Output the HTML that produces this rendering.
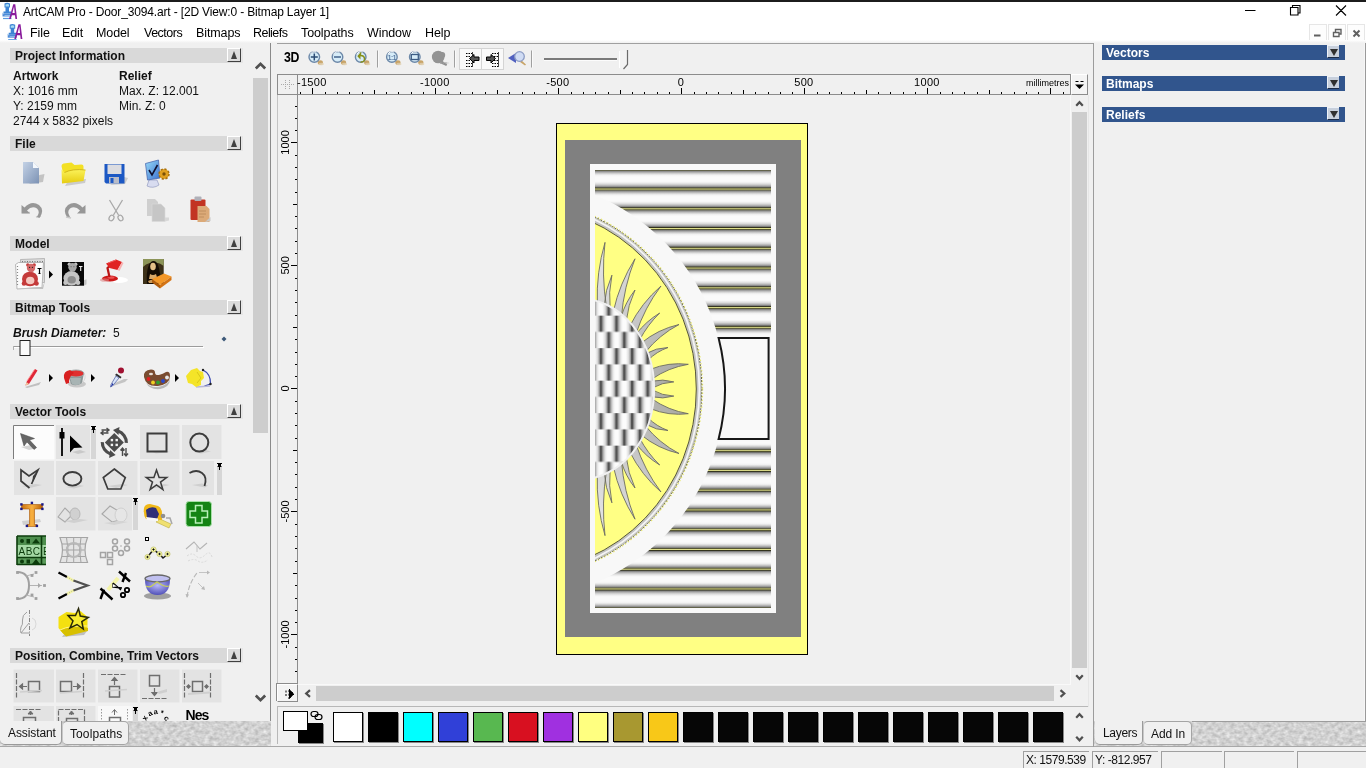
<!DOCTYPE html>
<html><head><meta charset="utf-8"><title>ArtCAM Pro</title>
<style>
*{box-sizing:border-box;margin:0;padding:0}
html,body{width:1366px;height:768px;overflow:hidden;background:#f0f0f0;font-family:"Liberation Sans",sans-serif;font-size:12px;color:#111}
.abs,.abs>*{position:absolute}
#root{position:relative;width:1366px;height:768px;overflow:hidden;background:transparent;will-change:transform}
#root div,#root span,#root svg{position:absolute}
.t{white-space:nowrap;line-height:14px}
.b{font-weight:bold}
/* title + menu */
#topline{left:0;top:0;width:1366px;height:2px;background:#1c1c1c}
#titlebar{left:0;top:2px;width:1366px;height:41px;background:#fff}
.title{left:23px;top:5px;font-size:12px;letter-spacing:-.15px;color:#000}
.menu{top:26px;font-size:12.5px;color:#000;letter-spacing:-.1px}
/* left panel */
#left{left:0;top:43px;width:270px;height:705px;background:#f0f0f0}
.hdr{left:10px;width:233px;height:15px;background:#d9d9d9}
.hdr .t{left:5px;top:1px;font-weight:bold;color:#111}
.hbtn{left:217px;top:0;width:14px;height:14px;background:#dcdcdc;border-right:1px solid #404040;border-bottom:1px solid #404040;border-left:1px solid #fff;border-top:1px solid #fff}
.hdr:after{content:"";position:absolute;left:231px;top:0;width:2px;height:15px;background:#e6e6e6}
.hbtn i{position:absolute;left:2.5px;top:2px;width:0;height:0;border-left:3.5px solid transparent;border-right:3.5px solid transparent;border-bottom:8px solid #404040}
/* right panel */
.rh{left:1102px;width:243px;height:15px;background:#31558d}
.rh .t{left:4px;top:1px;font-weight:bold;color:#fff}
.rbtn{left:225px;top:0;width:12px;height:13px;background:#c8d0dc;border-left:1px solid #eef2f8;border-top:1px solid #eef2f8;border-bottom:1px solid #1c2c48}
.rbtn i{position:absolute;left:1.5px;top:2.5px;width:0;height:0;border-left:4px solid transparent;border-right:4px solid transparent;border-top:7.5px solid #303030}
</style></head>
<body><div id="root">
<div id="topline"></div>
<div id="titlebar"></div>
<svg style="left:0;top:0" width="60" height="43" viewBox="0 0 60 43"><g><path d="M4.500 3.500q2.500-1.500 5.500 0v4h-1v4h2v2h-7.500v-2h2v-4h-1z" fill="#3c84d4"/><path d="M5.500 4.500q2-1 3.500 0v2h-3.500z" fill="#a8dcf4"/><path d="M2.500 13.500h9v3h-9z" fill="#4c8cd8"/><path d="M2 13l2 1M4.500 15.500h6" stroke="#a8c8ec" stroke-width=".8"/><path d="M3 18.500h8.500" stroke="#5c9ce0" stroke-width="1.200"/><text transform="translate(8.800,18.800) scale(.56,1) skewX(-8)" font-size="21.500" font-weight="bold" fill="#8a1c9c">A</text></g><g transform="translate(5.200,21.200)"><path d="M4.500 3.500q2.500-1.500 5.500 0v4h-1v4h2v2h-7.500v-2h2v-4h-1z" fill="#3c84d4"/><path d="M5.500 4.500q2-1 3.500 0v2h-3.500z" fill="#a8dcf4"/><path d="M2.500 13.500h9v3h-9z" fill="#4c8cd8"/><path d="M2 13l2 1M4.500 15.500h6" stroke="#a8c8ec" stroke-width=".8"/><path d="M3 18.500h8.500" stroke="#5c9ce0" stroke-width="1.200"/><text transform="translate(8.800,18) scale(.56,1) skewX(-8)" font-size="21.500" font-weight="bold" fill="#8a1c9c">A</text></g></svg>
<svg style="left:1226px;top:0" width="140" height="43" viewBox="1226 0 140 43"><path d="M1245 10.500h10.500M1290.500 7.500h7.500v7.500h-7.500zM1292.500 7.500v-2h7.500v7.500h-2M1336 5.500l10 10M1346 5.500l-10 10" fill="none" stroke="#000" stroke-width="1.100"/>
<rect x="1309.500" y="24.500" width="17" height="16.500" fill="#fdfdfd" stroke="#e6e6e6"/><rect x="1328.500" y="24.500" width="17" height="16.500" fill="#fdfdfd" stroke="#e6e6e6"/><rect x="1347.500" y="24.500" width="17" height="16.500" fill="#fdfdfd" stroke="#e6e6e6"/>
<path d="M1314 35.500h6.500" stroke="#606060" stroke-width="2"/><path d="M1333.500 32.500h5.500v4h-5.500zM1335.500 32v-2.500h5.500v4.500h-2" fill="none" stroke="#606060" stroke-width="1.400"/><path d="M1353.500 30.500l6 6M1359.500 30.500l-6 6" stroke="#606060" stroke-width="2"/></svg>
<div style="left:0;top:40px;width:1366px;height:3px;background:linear-gradient(#fff,#f0f0f0)"></div>
<span class="t title">ArtCAM Pro - Door_3094.art - [2D View:0 - Bitmap Layer 1]</span>
<span class="t menu" style="left:30px">File</span>
<span class="t menu" style="left:62px">Edit</span>
<span class="t menu" style="left:96px">Model</span>
<span class="t menu" style="left:144px;letter-spacing:-.5px">Vectors</span>
<span class="t menu" style="left:196px">Bitmaps</span>
<span class="t menu" style="left:253px;letter-spacing:-.55px">Reliefs</span>
<span class="t menu" style="left:301px">Toolpaths</span>
<span class="t menu" style="left:367px">Window</span>
<span class="t menu" style="left:425px">Help</span>

<!-- LEFT PANEL -->
<div id="left"></div>
<div class="hdr" style="top:48px"><span class="t">Project Information</span><div class="hbtn"><i></i></div></div>
<span class="t b" style="left:13px;top:69px">Artwork</span>
<span class="t b" style="left:119px;top:69px">Relief</span>
<span class="t" style="left:13px;top:84px">X: 1016 mm</span>
<span class="t" style="left:119px;top:84px">Max. Z: 12.001</span>
<span class="t" style="left:13px;top:99px">Y: 2159 mm</span>
<span class="t" style="left:119px;top:99px">Min. Z: 0</span>
<span class="t" style="left:13px;top:114px">2744 x 5832 pixels</span>
<div class="hdr" style="top:136px"><span class="t">File</span><div class="hbtn"><i></i></div></div>
<div class="hdr" style="top:236px"><span class="t">Model</span><div class="hbtn"><i></i></div></div>
<div class="hdr" style="top:300px"><span class="t">Bitmap Tools</span><div class="hbtn"><i></i></div></div>
<div class="hdr" style="top:404px"><span class="t">Vector Tools</span><div class="hbtn"><i></i></div></div>
<div class="hdr" style="top:648px"><span class="t">Position, Combine, Trim Vectors</span><div class="hbtn"><i></i></div></div>
<svg style="left:0;top:43px" width="270" height="678" viewBox="0 43 270 678">
<defs>
<linearGradient id="gdoc" x1="0" y1="0" x2="1" y2="1"><stop offset="0" stop-color="#c4d2e6"/><stop offset="1" stop-color="#7c92b4"/></linearGradient>
<linearGradient id="gfl" x1="0" y1="0" x2="0" y2="1"><stop offset="0" stop-color="#fbf25a"/><stop offset="1" stop-color="#e6cc10"/></linearGradient>
<linearGradient id="gmon" x1="0" y1="0" x2="1" y2="1"><stop offset="0" stop-color="#9adcf8"/><stop offset="1" stop-color="#3a70d0"/></linearGradient>
<linearGradient id="gT" x1="0" y1="0" x2="1" y2="0"><stop offset="0" stop-color="#c87010"/><stop offset=".5" stop-color="#f8b040"/><stop offset="1" stop-color="#b86008"/></linearGradient>
<radialGradient id="gbowl" cx=".5" cy=".4" r=".6"><stop offset="0" stop-color="#b8b8f8"/><stop offset="1" stop-color="#5050b8"/></radialGradient>
<linearGradient id="ggrn" x1="0" y1="0" x2="0" y2="1"><stop offset="0" stop-color="#98d898"/><stop offset="1" stop-color="#4ca04c"/></linearGradient>
</defs>
<path d="M29 184l14-2 1.5-8-5 1z" fill="#b8b8b8" opacity=".8"/>
<path d="M23 162h10l6 6v15.5H23z" fill="url(#gdoc)"/><path d="M33 162v6h6z" fill="#f4f8fc"/>
<path d="M65 186l20-3 1-4-18 2z" fill="#bbb" opacity=".7"/>
<path d="M61.500 166q0-2 2-2.500l8-1 3 2.500 7-.5q2 0 2 2v6l-20 3z" fill="#f3e024"/>
<path d="M62 183.500l-.5-14 3 3q8-4 21-2.500l-2 11z" fill="url(#gfl)"/><path d="M64.500 172.500q8-4 21-2.500" stroke="#c8aa10" stroke-width=".8" fill="none"/>
<path d="M110 185l15-1 3-6-4-1z" fill="#bbb" opacity=".7"/>
<path d="M104.500 164h20v19.500h-18.500l-1.500-1.500z" fill="#1c58c4"/><rect x="107.500" y="164.500" width="14" height="9.500" fill="#dcdce0"/><rect x="109" y="177" width="10" height="6.500" fill="#b8bcc8"/><rect x="110.500" y="178" width="3" height="5" fill="#1c58c4"/>
<path d="M147 186q6 3 12-1l-2-5h-8z" fill="#d8dcf0" stroke="#8890b8" stroke-width=".6"/>
<path d="M145.500 163.500l13-3.500 1.500 18-12.500 2z" fill="url(#gmon)" stroke="#4a68b0" stroke-width=".8"/>
<path d="M149 170l3 5 5.500-10" fill="none" stroke="#101030" stroke-width="1.600"/>
<circle cx="164" cy="174" r="5" fill="#e0a020" stroke="#a87010" stroke-width="1.500" stroke-dasharray="2.200 1.700"/><circle cx="164" cy="174" r="1.700" fill="#7a5008"/>
<path d="M22 212.500h8M36 217l5-1" stroke="#c8c8c8" stroke-width="1.500"/>
<path d="M21.500 205v8.500h8.500l-3-3q5-5.500 10-2 3.500 3 0 8.500l2.500 1q5.500-8-.5-13-7.500-5-14.500 2.500z" fill="#979797"/>
<g transform="translate(107,0) scale(-1,1)"><path d="M21.500 205v8.500h8.500l-3-3q5-5.500 10-2 3.500 3 0 8.500l2.500 1q5.500-8-.5-13-7.500-5-14.500 2.500z" fill="#979797"/></g><path d="M66 217l5 1" stroke="#c8c8c8" stroke-width="1.500"/>
<path d="M109.500 200l9 15M122.500 200l-9 15" stroke="#a8a8a8" stroke-width="1.300" fill="none"/><ellipse cx="111.500" cy="218" rx="2.300" ry="3" fill="none" stroke="#a8a8a8" stroke-width="1.200" transform="rotate(30 111.500 218)"/><ellipse cx="120.500" cy="218" rx="2.300" ry="3" fill="none" stroke="#a8a8a8" stroke-width="1.200" transform="rotate(-30 120.500 218)"/>
<path d="M147 199h8l3 3v14h-11z" fill="#cfcfcf"/><path d="M152 204h9l4 4v13.500h-13z" fill="#c6c6c6" stroke="#dadada" stroke-width=".6"/><path d="M165 221.500l4-1v-3h-4z" fill="#d8d8d8"/>
<rect x="190.500" y="199.500" width="15" height="20.500" rx="1" fill="#c23422"/><rect x="194.500" y="196.500" width="7" height="4.500" rx="1" fill="#b0b0b8"/><path d="M197.500 206h9l3 3v13h-12z" fill="#dcaa78"/><path d="M199 211h7M199 214h7M199 217h5" stroke="#b88858" stroke-width=".8"/><path d="M205 222l5.500-1v-4z" fill="#c8c8c8"/>
<path d="M20.500 259.500l24-1v24h-24z" fill="#dcdcdc" stroke="#a4a4a4" stroke-width=".7"/><path d="M22 262h21" stroke="#555" stroke-width="1.500" stroke-dasharray="1 1.500"/>
<path d="M15.500 264.500l3-2 25 0-1.500 25-25 1.500z" fill="#fbfbfb" stroke="#a8a8a8" stroke-width=".8"/><path d="M17.500 266v20" stroke="#888" stroke-width="1.200" stroke-dasharray="1 2"/><path d="M17 288.500l25.500-1.500 2.500-6-2 8z" fill="#c0c0c0"/>
<circle cx="27.8" cy="265" r="1.700" fill="#c43a3a"/><circle cx="34.2" cy="265" r="1.700" fill="#c43a3a"/><ellipse cx="30" cy="279" rx="8" ry="7.300" fill="#c43a3a"/><circle cx="24" cy="283.5" r="2.300" fill="#c43a3a"/><circle cx="36.5" cy="283.5" r="2.300" fill="#c43a3a"/><circle cx="31" cy="268" r="4.200" fill="#d46868"/><ellipse cx="30.2" cy="280.5" rx="4.200" ry="3.800" fill="#f4c8c0"/><circle cx="29.6" cy="267.4" r=".6" fill="#222"/><circle cx="32.4" cy="267.4" r=".6" fill="#222"/>
<path d="M37.500 268.500h4M39.500 268.500v5M38.500 273.500h2" stroke="#000" stroke-width="1.200"/>
<path d="M49 270.5l4 4-4 4z" fill="#000"/>
<rect x="62" y="262" width="22" height="23.700" fill="#080808"/><path d="M84 285.700l2.500-1.500v-5l-2.500 1z" fill="#c4c4c4"/>
<circle cx="69.3" cy="264.3" r="1.700" fill="#c4c4c4"/><circle cx="75.7" cy="264.3" r="1.700" fill="#c4c4c4"/><ellipse cx="71.5" cy="278.3" rx="8" ry="7.300" fill="#c4c4c4"/><circle cx="65.5" cy="282.8" r="2.300" fill="#c4c4c4"/><circle cx="78.0" cy="282.8" r="2.300" fill="#c4c4c4"/><circle cx="72.5" cy="267.3" r="4.200" fill="#a8a8a8"/><ellipse cx="71.7" cy="279.8" rx="4.200" ry="3.800" fill="#8c8c8c"/><circle cx="71.1" cy="266.7" r=".6" fill="#666"/><circle cx="73.9" cy="266.7" r=".6" fill="#666"/>
<path d="M79 266.500h3.500M80.700 266.500v4.500" stroke="#f0f0f0" stroke-width="1.100"/>
<ellipse cx="119" cy="280" rx="9" ry="3" fill="#fff"/><ellipse cx="110" cy="278.500" rx="8" ry="3" fill="#cc1818"/><ellipse cx="104.500" cy="280" rx="4.500" ry="1.800" fill="#d88" opacity=".6"/><ellipse cx="111" cy="277.500" rx="3.500" ry="1.300" fill="#ee5050"/>
<path d="M109.500 277l-2-9 3-3" fill="none" stroke="#b81414" stroke-width="2.200"/><path d="M106 263.500l10-4 6 2.500-4.500 8-8-2z" fill="#e02424"/><path d="M117.500 270l4.500-8 1.500 1-4 8z" fill="#f8b0b0"/><path d="M108 263l8-3" stroke="#f46060" stroke-width="1"/>
<rect x="143" y="259" width="20.700" height="25" fill="#3c3018"/><path d="M143 259h20.700v7q-4-3-6-3h-8q-4 1-6.700 4z" fill="#8c9458"/><path d="M147 284q-1-12 1.500-18 2-5 5-5t4.500 4q3 8 2 19z" fill="#140c04"/><ellipse cx="153" cy="266.500" rx="2.800" ry="3.800" fill="#e4c088"/><path d="M150 274q3 2 6 0l1.500 5h-8.500z" fill="#d8a868"/><path d="M148 281q5-3 10 0l-1 2h-8z" fill="#c89858"/>
<path d="M152 279l12-5.500 7.500 3-11.500 8.500z" fill="#f49828"/><path d="M152 279l8 6v3.500l-8-6z" fill="#b05c0c"/><path d="M160 285l11.500-8.500v3.500l-11.500 8.500z" fill="#d47414"/>
<path d="M13.500 346.500H203" stroke="#9c9c9c" stroke-width="1"/><path d="M14 347.500H204" stroke="#fff" stroke-width="1"/><path d="M13.500 346v4" stroke="#b0b0b0"/>
<rect x="20" y="340.500" width="10" height="15" fill="#fafafa" stroke="#222" stroke-width="1"/>
<path d="M224 336.500l2.500 2.500-2.500 2.500-2.500-2.500z" fill="#3c5878"/>
<path d="M25 387l16-5-2 3-12 3z" fill="#c0c0c0"/><path d="M25.500 385.500l1-3.500 8.500-13 2.500 1.500-8.500 13.500z" fill="#e02838"/><path d="M25.500 385.500l1-3.500 2.500 2z" fill="#f0c8a0"/><path d="M27 381l7.500-11.500" stroke="#f88" stroke-width=".8"/>
<path d="M49 374l4 4-4 4z" fill="#000"/>
<ellipse cx="77" cy="384" rx="9" ry="3.500" fill="#c8c8c8"/><path d="M68 374l3 10q5 3 11-1l2-10z" fill="#8c9898"/><path d="M70 378l2 6q4 2 8 0l1-6z" fill="#a8b4b4"/><ellipse cx="76" cy="373.500" rx="8" ry="3.500" fill="#e03030" stroke="#a0a8a8" stroke-width="1"/><path d="M64 378q-1-7 6-8l4 3q-5 3-5 10l-3 1z" fill="#d82020"/><path d="M84 373q3 5-2 10" fill="none" stroke="#d8d8d8" stroke-width="1"/>
<path d="M91 374l4 4-4 4z" fill="#000"/>
<path d="M113 386l12-4 3-3-4 0-9 4z" fill="#c4c4c4"/><circle cx="121" cy="370.500" r="3" fill="#a01030"/><path d="M116.500 373.500l5 3.500-1 1.500-5.500-3.500z" fill="#303030"/><path d="M116 376l3 2-6.500 8-2 1 .5-2.500z" fill="#d8e4f8" stroke="#5868a8" stroke-width=".8"/><path d="M112.500 383l-2 4 3-2.500z" fill="#2030a0"/>
<path d="M144 377q-1-7 7-7.500 4 0 4 3t4 2.500q4-1 7-3 4-1 4 4 0 8-12 10-12 1-14-9z" fill="#7a4c30"/><path d="M146 383q6 6 16 3 6-2 8-7 0 8-10 10-10 1-14-6z" fill="#a0a0a0" opacity=".7"/>
<circle cx="148.5" cy="379" r="1.900" fill="#e02020"/>
<circle cx="153" cy="382.5" r="1.900" fill="#f0d020"/>
<circle cx="158" cy="382.5" r="1.900" fill="#30a030"/>
<circle cx="163" cy="381" r="1.900" fill="#2848d0"/>
<circle cx="167" cy="377.5" r="1.900" fill="#e8e8e8"/>
<ellipse cx="151" cy="374" rx="2" ry="1.300" fill="#e8e0d8"/>
<path d="M175 374l4 4-4 4z" fill="#000"/>
<path d="M203 370q8 4 7.500 14l-6 2" fill="none" stroke="#3848b0" stroke-width="1.300"/><path d="M196 387l14-1" stroke="#b8b8d8" stroke-width="1.500"/><path d="M186 376l5-6 6-2 3 3 3 1 1 6-3 3 0 4-5 2-4-3-4-1z" fill="#f4e428"/><path d="M197 372l4 6-4 5" stroke="#d8c818" stroke-width="1" fill="none"/><circle cx="203" cy="370" r="1.200" fill="#222"/><circle cx="210.500" cy="384" r="1.200" fill="#222"/>
<rect x="13.500" y="425.500" width="41" height="34" fill="#fcfcfc"/><path d="M13.500 459V425.500H54" fill="none" stroke="#7c7c7c" stroke-width="1"/>
<path d="M21 447l10-2 6 3-8 2z" fill="#d4d4d4"/><path d="M20.500 433.500l14 5-5 1.500 7 7.500-2.500 2-7-7.500-3 4z" fill="#666" stroke="#444" stroke-width=".5"/>
<rect x="56" y="425" width="34" height="34" fill="#e3e3e3"/>
<path d="M72 452l8-2 6 2-8 2z" fill="#c8c8c8"/><path d="M62 428v28" stroke="#000" stroke-width="1.800"/><rect x="59.500" y="432" width="5" height="6.500" fill="#000"/><path d="M70 435.500v17l4-4.500 8.500-.5z" fill="#000"/>
<rect x="91" y="430" width="5" height="29" fill="#d6d6d6"/>
<path d="M91 426.5h5M91.5 429.5h4M93.5 430v3" stroke="#000" stroke-width="1" fill="none"/><rect x="92" y="427" width="3" height="2.500" fill="#000"/>
<path d="M114.3 433.0l9.500 9.500-9.500 9.500-9.500-9.500z" fill="#4c4c4c"/>
<rect x="110.7" y="438.9" width="2.400" height="2.400" fill="#f4f4f4"/>
<rect x="115.5" y="438.9" width="2.400" height="2.400" fill="#f4f4f4"/>
<rect x="110.7" y="443.7" width="2.400" height="2.400" fill="#f4f4f4"/>
<rect x="115.5" y="443.7" width="2.400" height="2.400" fill="#f4f4f4"/>
<path d="M118.0 431.1A12 12 0 0 1 126.3 442.9" fill="none" stroke="#4c4c4c" stroke-width="3.200"/><path d="M119.5 426.9l-6.500 3 5.500 5z" fill="#4c4c4c"/>
<path d="M110.6 453.9A12 12 0 0 1 102.3 442.1" fill="none" stroke="#4c4c4c" stroke-width="3.200"/><path d="M109.1 458.1l6.500-3-5.500-5z" fill="#4c4c4c"/>
<path d="M101.500 430h7M108.500 433h-7M106.500 428l2.500 2-2.500 2M103.500 431l-2.500 2 2.500 2" stroke="#4c4c4c" stroke-width="1.400" fill="none"/>
<path d="M122.500 448v8M126 456v-8M120.500 450.500l2-2.500 2 2.500M124 453.500l2 2.500 2-2.500" stroke="#4c4c4c" stroke-width="1.400" fill="none"/>
<rect x="140" y="425" width="39.5" height="34" fill="#e3e3e3"/>
<path d="M150 451l14-1 6 2-14 1.500z" fill="#cfcfcf"/><rect x="147.500" y="433.500" width="19" height="18" fill="none" stroke="#3c3c3c" stroke-width="2"/>
<rect x="182" y="425" width="39.5" height="34" fill="#e3e3e3"/>
<path d="M194 452l12-2 5 1.500-10 2z" fill="#cfcfcf"/><circle cx="199.300" cy="442.600" r="9" fill="none" stroke="#3c3c3c" stroke-width="2"/>
<rect x="14" y="461" width="40" height="34" fill="#e3e3e3"/>
<path d="M22 486l14-2 6 1-12 3z" fill="#cfcfcf"/><path d="M29.500 488l-8.500-7V470l8 6 9-6-6.500 14" fill="none" stroke="#3c3c3c" stroke-width="1.700"/><path d="M38 470.500l-6 13.500 1-8z" fill="#3c3c3c"/>
<rect x="56" y="461" width="39.5" height="34" fill="#e3e3e3"/>
<path d="M66 487l14-2 4 1-10 2.500z" fill="#cfcfcf"/><ellipse cx="72.400" cy="478.800" rx="9" ry="6.800" fill="none" stroke="#3c3c3c" stroke-width="1.900"/>
<rect x="98" y="461" width="39.5" height="34" fill="#e3e3e3"/>
<path d="M108 486l14-2 6 1-12 3z" fill="#cfcfcf"/><path d="M114.300 469l11 8.500-4.500 11.500h-13l-4.500-11.500z" fill="none" stroke="#3c3c3c" stroke-width="1.700"/>
<rect x="140" y="461" width="39.5" height="34" fill="#e3e3e3"/>
<path d="M148 487l16-3 6 1-14 3z" fill="#cfcfcf"/><path d="M156.500 470l2.600 7.500h7.600l-6.200 4.600 2.400 7.400-6.400-4.600-6.400 4.600 2.400-7.400-6.200-4.600h7.600z" fill="none" stroke="#3c3c3c" stroke-width="1.500"/>
<rect x="182" y="461" width="32" height="34" fill="#e3e3e3"/>
<path d="M192 485l10-1.500 6 2-3 2z" fill="#cfcfcf"/><path d="M189.500 473q7-4 12.500 0t2.500 13" fill="none" stroke="#3c3c3c" stroke-width="1.800"/>
<rect x="217" y="467" width="5" height="28" fill="#d6d6d6"/>
<path d="M217 463.5h5M217.5 466.5h4M219.5 467v3" stroke="#000" stroke-width="1" fill="none"/><rect x="218" y="464" width="3" height="2.500" fill="#000"/>
<path d="M22 521l18-2 1 3-18 3z" fill="#d0d0d0"/><path d="M21.500 504.500h21v4.500h-8v15.500h2.500v2h-10v-2h2.500v-15.500h-8z" fill="url(#gT)" stroke="#a85808" stroke-width=".6"/>
<rect x="20.2" y="503.2" width="2.400" height="2.400" fill="#181888"/>
<rect x="41.2" y="503.2" width="2.400" height="2.400" fill="#181888"/>
<rect x="20.2" y="507.7" width="2.400" height="2.400" fill="#181888"/>
<rect x="41.2" y="507.7" width="2.400" height="2.400" fill="#181888"/>
<rect x="25.7" y="524.7" width="2.400" height="2.400" fill="#181888"/>
<rect x="35.7" y="524.7" width="2.400" height="2.400" fill="#181888"/>
<rect x="30.7" y="501.7" width="2.400" height="2.400" fill="#181888"/>
<rect x="56" y="497" width="39.5" height="33.5" fill="#e3e3e3"/>
<path d="M58 517l7-9 7 7-7 7z" fill="none" stroke="#a8a8a8" stroke-width="1.100"/><ellipse cx="75" cy="514" rx="5" ry="6" fill="#d0d0d0" stroke="#b8b8b8"/><path d="M64 521l16-2 8 1-14 3z" fill="#d0d0d0"/>
<rect x="98" y="497" width="34" height="33.5" fill="#e3e3e3"/>
<path d="M102 514l8-8 10 6v8l-8 2z" fill="none" stroke="#a8a8a8" stroke-width="1.100"/><ellipse cx="121" cy="515" rx="6" ry="7" fill="#e6e6e6" stroke="#d0d0d0"/><path d="M104 523l16-2 8 1-14 3z" fill="#d4d4d4"/>
<rect x="133" y="502" width="5" height="28" fill="#d6d6d6"/>
<path d="M133 498.5h5M133.5 501.5h4M135.5 502v3" stroke="#000" stroke-width="1" fill="none"/><rect x="134" y="499" width="3" height="2.500" fill="#000"/>
<path d="M160 519l11 5-2 4-13-6z" fill="#f0e070" stroke="#b0a030" stroke-width=".5"/><path d="M166 518l4 0 2 6" stroke="#a8a8a8" stroke-width="1.500" fill="none"/><path d="M144 508q1-4 6-4l8 2q4 2 4 8v6l-16-1q-3-4-2-11z" fill="#f0b818"/><path d="M146 510q4-4 10-2l3 6-2 5-10-1z" fill="#303078"/><path d="M146 517l12 1.500v2.500l-11-1z" fill="#f8f8f8"/><circle cx="163" cy="516" r="2.300" fill="#909090"/>
<rect x="186" y="501.500" width="25.500" height="25" rx="3" fill="#148414" stroke="#a8e0a8" stroke-width="1"/><path d="M195.500 505.500h6.500v5.500h5.500v6.500h-5.500v5.500h-6.500v-5.500h-5.500v-6.500h5.500z" fill="none" stroke="#b8f0b8" stroke-width="1.500"/>
<rect x="17" y="536" width="29" height="29" fill="#a4d8a4"/><rect x="17" y="536" width="29" height="9" fill="#4e8e4e"/><rect x="17" y="558" width="29" height="7" fill="#5a9a5a"/><path d="M17 536h29M17 536v29M17 564.500h29M17 557.500h29M41.500 536v29" stroke="#0c3c0c" stroke-width="1.600" fill="none"/>
<circle cx="22" cy="541" r="2" fill="#0c3c0c"/><rect x="26.500" y="539" width="3.500" height="4.500" fill="#0c3c0c"/><path d="M32 543.500l4-5 4 5z" fill="#0c3c0c"/><circle cx="22" cy="561.500" r="2" fill="#0c3c0c"/><rect x="26.500" y="559.500" width="3.500" height="4" fill="#0c3c0c"/><path d="M32 564l4-5 4 5z" fill="#0c3c0c"/>
<clipPath id="abcc"><rect x="17" y="536" width="29" height="29"/></clipPath><g clip-path="url(#abcc)"><text x="18.500" y="554.500" font-size="10" fill="#0c3c0c" textLength="21.500">ABC</text><text x="43" y="554.500" font-size="10" fill="#0c3c0c">E</text></g>
<path d="M60 537.500h27.500q-5 12.500 0 25h-27.500q5-12.500 0-25z" fill="#e4e4e4" stroke="#a4a4a4" stroke-width="1.200"/><path d="M66.500 537.500q3 12.500 0 25M73.700 537.500v25M81 537.500q-3 12.500 0 25M62 544h23.500M63 550h21.500M62 556.500h23.500" stroke="#a4a4a4" stroke-width="1" fill="none"/><circle cx="73.700" cy="550" r="7" fill="none" stroke="#b8b8b8" stroke-width="2"/>
<rect x="100.5" y="552.5" width="5" height="5" fill="none" stroke="#a4a4a4" stroke-width="1.500"/>
<rect x="107.5" y="552.5" width="5" height="5" fill="none" stroke="#a4a4a4" stroke-width="1.500"/>
<rect x="107.5" y="559.5" width="5" height="5" fill="none" stroke="#a4a4a4" stroke-width="1.500"/>
<circle cx="115" cy="541.5" r="2.500" fill="none" stroke="#a4a4a4" stroke-width="1.500"/>
<circle cx="127" cy="541.5" r="2.500" fill="none" stroke="#a4a4a4" stroke-width="1.500"/>
<circle cx="115" cy="548.5" r="2.500" fill="none" stroke="#a4a4a4" stroke-width="1.500"/>
<circle cx="127" cy="548.5" r="2.500" fill="none" stroke="#a4a4a4" stroke-width="1.500"/>
<circle cx="121" cy="553" r="2.500" fill="none" stroke="#a4a4a4" stroke-width="1.500"/>
<circle cx="121" cy="546" r=".8" fill="#a4a4a4"/>
<rect x="145.500" y="537.500" width="3" height="3" fill="#fff" stroke="#000" stroke-width="1"/><path d="M147.500 557l6-7.500 6 4.500 3.500 4 5-4" fill="none" stroke="#181818" stroke-width="1.600"/>
<circle cx="147.5" cy="557" r="2.600" fill="#f4f4a0" stroke="#b8b860" stroke-width=".6"/><path d="M146.3 557h2.400M147.5 555.8v2.400" stroke="#000" stroke-width=".8"/>
<circle cx="153.5" cy="549.5" r="2.600" fill="#f4f4a0" stroke="#b8b860" stroke-width=".6"/><path d="M152.3 549.5h2.400M153.5 548.3v2.400" stroke="#000" stroke-width=".8"/>
<circle cx="159.5" cy="554" r="2.600" fill="#f4f4a0" stroke="#b8b860" stroke-width=".6"/><path d="M158.3 554h2.400M159.5 552.8v2.400" stroke="#000" stroke-width=".8"/>
<circle cx="167.5" cy="554" r="2.600" fill="#f4f4a0" stroke="#b8b860" stroke-width=".6"/><path d="M166.3 554h2.400M167.5 552.8v2.400" stroke="#000" stroke-width=".8"/>
<path d="M186 549l8-7 6 7 7-6" fill="none" stroke="#b4b4b4" stroke-width="1.100"/><path d="M187 556q5-4 9 0t9-1 7 2M188 561q6-3 10 0t10-1" fill="none" stroke="#dadada" stroke-width="1" stroke-dasharray="2 1.500"/><path d="M197 546v6" stroke="#c4c4c4"/>
<path d="M17 572q12 0 12 13.500T17 599" fill="none" stroke="#a0a0a0" stroke-width="2"/><path d="M26 576l8-2M26 595l8 2M30 585.500h12" stroke="#b4b4b4" stroke-width="1"/><path d="M38 583l3 2.500-3 2.500z" fill="#a8a8a8"/>
<rect x="30.6" y="574.1" width="2.800" height="2.800" fill="#a0a0a0"/>
<rect x="34.6" y="571.1" width="2.800" height="2.800" fill="#a0a0a0"/>
<rect x="30.6" y="593.6" width="2.800" height="2.800" fill="#a0a0a0"/>
<rect x="34.6" y="597.1" width="2.800" height="2.800" fill="#a0a0a0"/>
<rect x="43.1" y="584.1" width="2.800" height="2.800" fill="#a0a0a0"/>
<rect x="16.1" y="571.1" width="2.800" height="2.800" fill="#a0a0a0"/>
<rect x="16.1" y="597.1" width="2.800" height="2.800" fill="#a0a0a0"/>
<path d="M58.500 572.500l8.500 4.500M58.500 598.500l8.500-4.500" stroke="#000" stroke-width="2.200"/><path d="M67 577l7 4M67 594l7-4" stroke="#f4f4a8" stroke-width="2.600"/><path d="M67 577l7 4M67 594l7-4" stroke="#888" stroke-width=".6" stroke-dasharray="1 1.500"/><path d="M73.500 580.500l14 5-14 5" fill="none" stroke="#505050" stroke-width="2.200"/>
<path d="M108 590l10-12" stroke="#f4f4a8" stroke-width="4"/><path d="M100.500 588.500l12 11M104 589.500l-3.500 9.500M119 571.500l11 10M126 573l-3.500 9" stroke="#000" stroke-width="2.400"/><circle cx="123" cy="595" r="2.200" fill="none" stroke="#000" stroke-width="1.800"/><circle cx="127" cy="590" r="2.200" fill="none" stroke="#000" stroke-width="1.800"/><path d="M113 583l8 7M113 587l9 1" stroke="#000" stroke-width="1.400"/><path d="M112.500 583.500l5 3-5 1z" fill="#fff" stroke="#000" stroke-width=".6"/>
<ellipse cx="157.500" cy="596" rx="13.500" ry="3.500" fill="#a0a0a0"/><path d="M145 579q0 16 12.500 16t12.500-16z" fill="url(#gbowl)"/><ellipse cx="157.500" cy="578.500" rx="12.500" ry="3.500" fill="#c0c0f0" stroke="#686868" stroke-width="1.300"/><path d="M146 586q4 2 7-1l4-3 5 3q4 2 7 1" fill="none" stroke="#c8d058" stroke-width="1.200"/>
<path d="M187 597q2-14 10-24" fill="none" stroke="#b8b8b8" stroke-width="1.100" stroke-dasharray="5 2"/><path d="M199 572.500h10M198 583l6 6" stroke="#c4c4c4" stroke-width="1"/><path d="M207 570.500l3 2-3 2zM204 586l1 4-4-1zM185.500 594l1.500 4 2-3.500z" fill="#b8b8b8"/>
<path d="M29.500 610v26" stroke="#888" stroke-width="1" stroke-dasharray="4 1.500 1 1.500"/><path d="M27 612q-5 3-4.500 8t-1.500 7q-1 4 0 6h9M21 633l8-10" fill="none" stroke="#a0a0a0" stroke-width="1"/><path d="M32 618q4 1 4 6t-4 6" fill="none" stroke="#d8d8d8" stroke-width="1"/>
<path d="M62 637l22-2 3-4-22 2z" fill="#c0c0c0"/><path d="M58.500 617l8-5 8 1 6-2 7 6v11l-24 6-5-6z" fill="#f4e010"/><path d="M60 630q10-5 28-2v3l-22 5.500z" fill="#d8c000"/><path d="M60 630q10-5 28-4" stroke="#fff48c" stroke-width="1" fill="none"/><path d="M78.500 608.500l1.800 7.500 8 1.500-6.500 4 1.500 7.500-6.300-4.500-7 3.500 3-7-5-5.500 7.500 0z" fill="#f8ec30" stroke="#282808" stroke-width="1.500"/>
<rect x="13.5" y="669.5" width="40.5" height="33" fill="#e3e3e3"/>
<path d="M16.500 673v26" stroke="#6e6e6e" stroke-width="1.200" stroke-dasharray="5 1.500"/><rect x="28.500" y="681.500" width="11" height="10" fill="none" stroke="#6e6e6e" stroke-width="1.500"/><path d="M20 686.500h7M22.500 684l-3 2.500 3 2.500z" stroke="#6e6e6e" fill="#6e6e6e" stroke-width="1.200"/><path d="M20 692l22-1.500" stroke="#cfcfcf" stroke-width="1.500"/>
<rect x="56" y="669.5" width="39.5" height="33" fill="#e3e3e3"/>
<path d="M83.500 673v26" stroke="#6e6e6e" stroke-width="1.200" stroke-dasharray="5 1.500"/><rect x="60.500" y="681.500" width="11" height="10" fill="none" stroke="#6e6e6e" stroke-width="1.500"/><path d="M73 686.500h7M77.500 684l3 2.500-3 2.500z" stroke="#6e6e6e" fill="#6e6e6e" stroke-width="1.200"/><path d="M60 693l22-1.500" stroke="#cfcfcf" stroke-width="1.500"/>
<rect x="98" y="669.5" width="39.5" height="33" fill="#e3e3e3"/>
<path d="M101 674.500h26" stroke="#6e6e6e" stroke-width="1.200" stroke-dasharray="5 1.500"/><rect x="109.500" y="686.500" width="10" height="10.500" fill="none" stroke="#6e6e6e" stroke-width="1.500"/><path d="M114.500 685v-7M112 680.500l2.500-3 2.500 3z" stroke="#6e6e6e" fill="#6e6e6e" stroke-width="1.200"/><path d="M105 691l22-1.500" stroke="#cfcfcf" stroke-width="1.500"/>
<rect x="140" y="669.5" width="39.5" height="33" fill="#e3e3e3"/>
<path d="M142 698.500h26" stroke="#6e6e6e" stroke-width="1.200" stroke-dasharray="5 1.500"/><rect x="149.500" y="675.500" width="10" height="10.500" fill="none" stroke="#6e6e6e" stroke-width="1.500"/><path d="M154.500 688v7M152 692.500l2.500 3 2.500-3z" stroke="#6e6e6e" fill="#6e6e6e" stroke-width="1.200"/><path d="M157 692l10-3v3l-8 2z" fill="#cfcfcf"/>
<rect x="182" y="669.5" width="39.5" height="33" fill="#e3e3e3"/>
<path d="M184.500 673v26M210.500 673v26" stroke="#6e6e6e" stroke-width="1.200" stroke-dasharray="5 1.500"/><rect x="192.500" y="681.500" width="10" height="10" fill="none" stroke="#6e6e6e" stroke-width="1.500"/><path d="M186 686.500l2.500-2.500 2.500 2.500-2.500 2.500zM204 686.500l2.500-2.500 2.500 2.500-2.500 2.500z" fill="#6e6e6e"/><path d="M188 694l22-1.500" stroke="#cfcfcf" stroke-width="2"/>
<rect x="13.5" y="706" width="40.5" height="20" fill="#e3e3e3"/>
<path d="M16 709.500h26" stroke="#6e6e6e" stroke-width="1.200" stroke-dasharray="5 1.500"/><path d="M30.500 715v-3M28 714l2.500-3 2.500 3z" stroke="#6e6e6e" fill="#6e6e6e"/><rect x="23.500" y="717.500" width="12" height="8" fill="none" stroke="#6e6e6e" stroke-width="1.500"/>
<rect x="56" y="706" width="39.5" height="20" fill="#e3e3e3"/>
<rect x="58.500" y="709.500" width="26" height="16" fill="none" stroke="#6e6e6e" stroke-width="1.200" stroke-dasharray="5 1.500"/><path d="M71.500 715v-3M69 714l2.500-3 2.500 3z" stroke="#6e6e6e" fill="#6e6e6e"/><rect x="66.500" y="718.500" width="11" height="8" fill="none" stroke="#6e6e6e" stroke-width="1.500"/>
<rect x="98" y="706" width="34" height="20" fill="#f8f8f8"/><path d="M101.500 709v14M127.500 709v14" stroke="#999" stroke-width="1" stroke-dasharray="1.500 1.500"/><path d="M114.500 715v-5M112 712.500l2.500-3 2.500 3" stroke="#6e6e6e" fill="none"/><rect x="109.500" y="717.500" width="11" height="8" fill="none" stroke="#6e6e6e" stroke-width="1.500"/>
<rect x="133" y="711" width="5" height="16" fill="#d6d6d6"/>
<path d="M133 707.5h5M133.5 710.5h4M135.5 711v3" stroke="#000" stroke-width="1" fill="none"/><rect x="134" y="708" width="3" height="2.500" fill="#000"/>
<text font-size="7.500" font-weight="bold" fill="#000"><tspan x="146" y="721" rotate="-60">x</tspan><tspan x="149.500" y="716.500" rotate="-30">a</tspan><tspan x="154" y="714.500" rotate="-10">a</tspan><tspan x="159.500" y="714.500" rotate="25">*</tspan><tspan x="163.500" y="718" rotate="55">c</tspan></text>
<text x="185.500" y="719.500" font-size="14" font-weight="bold" fill="#000" letter-spacing="-.9">Nes</text><text x="190" y="729.500" font-size="13" font-weight="bold" fill="#000" letter-spacing="-.9">Nes</text>
</svg>
<span class="t" style="left:13px;top:326px;font-weight:bold;font-style:italic">Brush Diameter:</span><span class="t" style="left:113px;top:326px">5</span>
<div style="left:253px;top:78px;width:15px;height:355px;background:#cdcdcd"></div>
<svg style="left:250px;top:55px" width="20" height="660"><path d="M5.800 13.500L10.500 8.800l4.700 4.700M5.800 640.500l4.700 4.700 4.700-4.700" fill="none" stroke="#505050" stroke-width="2.700"/></svg>

<!-- RIGHT PANEL -->
<div class="rh" style="top:45px"><span class="t">Vectors</span><div class="rbtn"><i></i></div></div>
<div class="rh" style="top:76px"><span class="t">Bitmaps</span><div class="rbtn"><i></i></div></div>
<div class="rh" style="top:107px"><span class="t">Reliefs</span><div class="rbtn"><i></i></div></div>
<div style="left:270px;top:43px;width:1px;height:704px;background:#8a8a8a"></div>
<div style="left:277px;top:43px;width:816px;height:1px;background:#a0a0a0"></div>
<span class="t" style="left:284px;font-size:15px;font-weight:bold;letter-spacing:-.3px;color:#000;transform:scaleX(.82);transform-origin:0 0;top:50px">3D</span>
<svg style="left:0;top:0" width="1366" height="768" viewBox="0 0 1366 768"><rect x="277.5" y="74.5" width="793" height="20" fill="#f0f0f0" stroke="#8c8c8c"/><rect x="277.5" y="94.5" width="20" height="589" fill="#f0f0f0" stroke="#8c8c8c"/><path d="M277.500 95v588" stroke="#c4c4c4"/><line x1="297.5" y1="74" x2="297.5" y2="94" stroke="#8c8c8c"/><path d="M300.5 92V94M312.5 88V94M325.5 92V94M337.5 92V94M349.5 92V94M362.5 92V94M374.5 90V94M386.5 92V94M398.5 92V94M411.5 92V94M423.5 92V94M435.5 88V94M448.5 92V94M460.5 92V94M472.5 92V94M485.5 92V94M497.5 90V94M509.5 92V94M522.5 92V94M534.5 92V94M546.5 92V94M558.5 88V94M571.5 92V94M583.5 92V94M595.5 92V94M608.5 92V94M620.5 90V94M632.5 92V94M644.5 92V94M657.5 92V94M669.5 92V94M681.5 88V94M694.5 92V94M706.5 92V94M718.5 92V94M731.5 92V94M743.5 90V94M755.5 92V94M768.5 92V94M780.5 92V94M792.5 92V94M804.5 88V94M817.5 92V94M829.5 92V94M841.5 92V94M854.5 92V94M866.5 90V94M878.5 92V94M890.5 92V94M903.5 92V94M915.5 92V94M927.5 88V94M940.5 92V94M952.5 92V94M964.5 92V94M977.5 92V94M989.5 90V94M1001.5 92V94M1014.5 92V94M1026.5 92V94M1038.5 92V94M1050.5 88V94M1063.5 92V94" stroke="#000" stroke-width="1" fill="none"/><path d="M295 671.5H297M295 659.5H297M295 647.5H297M291 634.5H297M295 622.5H297M295 610.5H297M295 598.5H297M295 585.5H297M293 573.5H297M295 561.5H297M295 548.5H297M295 536.5H297M295 524.5H297M291 511.5H297M295 499.5H297M295 487.5H297M295 474.5H297M295 462.5H297M293 450.5H297M295 438.5H297M295 425.5H297M295 413.5H297M295 401.5H297M291 388.5H297M295 376.5H297M295 364.5H297M295 352.5H297M295 339.5H297M293 327.5H297M295 315.5H297M295 302.5H297M295 290.5H297M295 278.5H297M291 265.5H297M295 253.5H297M295 241.5H297M295 228.5H297M295 216.5H297M293 204.5H297M295 192.5H297M295 179.5H297M295 167.5H297M295 155.5H297M291 142.5H297M295 130.5H297M295 118.5H297M295 106.5H297" stroke="#000" stroke-width="1" fill="none"/><text x="311.8" y="86" font-size="11" letter-spacing=".3" text-anchor="middle" fill="#000">-1500</text><text x="434.8" y="86" font-size="11" letter-spacing=".3" text-anchor="middle" fill="#000">-1000</text><text x="557.8" y="86" font-size="11" letter-spacing=".3" text-anchor="middle" fill="#000">-500</text><text x="680.9" y="86" font-size="11" letter-spacing=".3" text-anchor="middle" fill="#000">0</text><text x="803.9" y="86" font-size="11" letter-spacing=".3" text-anchor="middle" fill="#000">500</text><text x="926.9" y="86" font-size="11" letter-spacing=".3" text-anchor="middle" fill="#000">1000</text><text transform="translate(289,634.4) rotate(-90)" font-size="11" text-anchor="middle" fill="#000">-1000</text><text transform="translate(289,511.4) rotate(-90)" font-size="11" text-anchor="middle" fill="#000">-500</text><text transform="translate(289,388.4) rotate(-90)" font-size="11" text-anchor="middle" fill="#000">0</text><text transform="translate(289,265.4) rotate(-90)" font-size="11" text-anchor="middle" fill="#000">500</text><text transform="translate(289,142.4) rotate(-90)" font-size="11" text-anchor="middle" fill="#000">1000</text><text x="1069" y="86" font-size="9" text-anchor="end" fill="#000">millimetres</text><path d="M281 84.5H294M285.5 80V90M289.5 80V90" stroke="#aaa" stroke-dasharray="1 1" fill="none"/></svg><svg style="left:0;top:0" width="1366" height="768" viewBox="0 0 1366 768">
<defs>
<linearGradient id="sg" x1="0" y1="0" x2="0" y2="1">
<stop offset="0" stop-color="#e2e28c"/><stop offset=".045" stop-color="#e2e28c"/><stop offset=".055" stop-color="#4c4c24"/><stop offset=".09" stop-color="#5c5c40"/><stop offset=".11" stop-color="#7c7c7c"/>
<stop offset=".2" stop-color="#bcbcbc"/><stop offset=".31" stop-color="#f0f0f0"/><stop offset=".4" stop-color="#fafafa"/><stop offset=".66" stop-color="#fafafa"/>
<stop offset=".78" stop-color="#dadada"/><stop offset=".88" stop-color="#a6a6a6"/><stop offset=".93" stop-color="#7a7a7a"/><stop offset=".955" stop-color="#34341c"/><stop offset="1" stop-color="#2c2c18"/>
</linearGradient>
<pattern id="sp" x="0" y="188.5" width="200" height="19.76" patternUnits="userSpaceOnUse"><rect width="200" height="19.76" fill="url(#sg)"/></pattern>
<linearGradient id="cg" x1="0" y1="0" x2="1" y2="0">
<stop offset="0" stop-color="#383838"/><stop offset=".06" stop-color="#6a6a6a"/><stop offset=".17" stop-color="#b8b8b8"/><stop offset=".3" stop-color="#ececec"/><stop offset=".42" stop-color="#fcfcfc"/><stop offset=".62" stop-color="#fcfcfc"/><stop offset=".78" stop-color="#dcdcdc"/><stop offset=".9" stop-color="#a0a0a0"/><stop offset=".96" stop-color="#5c5c5c"/><stop offset="1" stop-color="#343434"/>
</linearGradient>
<pattern id="cp" x="600.8" y="283.15" width="15.6" height="32.5" patternUnits="userSpaceOnUse">
<rect x="0" y="0" width="15.6" height="16.6" fill="url(#cg)"/>
<rect x="-7.8" y="16.25" width="15.6" height="16.25" fill="url(#cg)"/><rect x="7.8" y="16.25" width="15.6" height="16.25" fill="url(#cg)"/>
</pattern>
<linearGradient id="rg" x1="0" y1="0" x2="1" y2="1"><stop offset="0" stop-color="#e8e8e8"/><stop offset=".5" stop-color="#c6c6c6"/><stop offset="1" stop-color="#a2a29a"/></linearGradient>
<clipPath id="pc"><rect x="595" y="170" width="176" height="438"/></clipPath>
</defs>
<rect x="556.5" y="123.5" width="251" height="531" fill="#ffff84" stroke="#000"/>
<rect x="565" y="140" width="236" height="497" fill="#808080"/>
<rect x="590" y="164" width="186" height="449" fill="#f8f8f8"/>
<rect id="st" x="595" y="170" width="176" height="219.5" fill="url(#sp)"/><use href="#st" transform="matrix(1 0 0 -1 0 778)"/>
<g clip-path="url(#pc)">
<circle cx="514.6" cy="389" r="210" fill="#f8f8f8"/>
<ellipse cx="522.0" cy="389" rx="180.6" ry="188.79999999999998" fill="none" stroke="#e8e870" stroke-width="1.2" stroke-dasharray="1.5 2"/>
<ellipse cx="522.0" cy="389" rx="179.7" ry="187.89999999999998" fill="#ffff84" stroke="#3c3c28" stroke-width=".9" stroke-dasharray="2 1.2"/>
<ellipse cx="522.0" cy="389" rx="177.0" ry="185.2" fill="#ffff84" stroke="#c2c2c2" stroke-width="5"/>
<ellipse cx="522.0" cy="389" rx="177.4" ry="185.6" fill="none" stroke="#f4f4f4" stroke-width="1.8"/>
<ellipse cx="522.0" cy="389" rx="174.3" ry="182.5" fill="none" stroke="#55553c" stroke-width="1"/>
<path id="rays" d="M597.3 303.7Q596.2 272.4 605.0 242.4Q601.3 275.0 606.5 307.4ZM604.1 306.4Q605.1 290.1 611.9 275.2Q608.3 292.2 610.2 309.5ZM613.4 311.3Q619.6 283.2 635.0 258.8Q623.8 287.0 621.4 317.3ZM621.1 317.1Q625.4 302.2 635.0 290.0Q627.9 305.2 626.1 321.8ZM629.9 325.9Q641.5 302.9 661.0 286.0Q644.5 307.8 636.0 333.8ZM636.1 334.2Q645.9 321.4 659.7 313.0Q647.5 324.9 639.6 340.0ZM641.3 343.0Q658.0 329.3 679.0 324.5Q659.3 334.9 645.4 352.2ZM645.9 353.7Q656.1 347.7 668.0 347.5Q656.5 351.6 648.0 360.2ZM650.2 369.4Q668.6 361.9 688.3 364.3Q668.3 367.6 651.6 379.3ZM651.7 381.3Q662.8 378.6 673.8 381.9Q662.2 382.4 652.0 388.1Z" fill="url(#rg)" stroke="#6c6c60" stroke-width=".9"/>
<use href="#rays" transform="matrix(1 0 0 -1 0 778)"/>
<ellipse cx="579.0" cy="389" rx="75.2" ry="90.6" fill="#d8d8d8"/><ellipse cx="579.0" cy="389" rx="75.2" ry="90.6" fill="url(#cp)" stroke="#f0f0f0" stroke-width="2"/>
</g>
<path d="M716.5 335.5H771V441.5H716.5Q730.5 389 716.5 335.5Z" fill="#f8f8f8"/>
<path d="M718.6 338H768.6V439H718.6Q731.5 389 718.6 338Z" fill="#f9f9f9" stroke="#181818" stroke-width="2"/>
</svg><svg style="left:277px;top:44px" width="400" height="30" viewBox="277 44 400 30">
<ellipse cx="320.3" cy="62.5" rx="2.600" ry="2.300" fill="#c8a468"/><ellipse cx="321.3" cy="64" rx="2.600" ry="1.300" fill="#e0d0b0" opacity=".8"/>
<circle cx="314.3" cy="57" r="5.300" fill="#d6ecf8" stroke="#6c88a8" stroke-width="1.400"/><path d="M310.3 54.5a5 5 0 0 1 6-2.500" stroke="#fff" stroke-width="1" fill="none"/>
<path d="M310.800 57h7M314.300 53.500v7" stroke="#2c4c74" stroke-width="1.500"/>
<ellipse cx="343.5" cy="62.5" rx="2.600" ry="2.300" fill="#c8a468"/><ellipse cx="344.5" cy="64" rx="2.600" ry="1.300" fill="#e0d0b0" opacity=".8"/>
<circle cx="337.5" cy="57" r="5.300" fill="#d6ecf8" stroke="#6c88a8" stroke-width="1.400"/><path d="M333.5 54.5a5 5 0 0 1 6-2.500" stroke="#fff" stroke-width="1" fill="none"/>
<path d="M334 57h7" stroke="#4c6c94" stroke-width="1.600"/>
<ellipse cx="366.7" cy="62.5" rx="2.600" ry="2.300" fill="#c8a468"/><ellipse cx="367.7" cy="64" rx="2.600" ry="1.300" fill="#e0d0b0" opacity=".8"/>
<circle cx="360.7" cy="57" r="5.300" fill="#d6ecf8" stroke="#6c88a8" stroke-width="1.400"/><path d="M356.7 54.5a5 5 0 0 1 6-2.500" stroke="#fff" stroke-width="1" fill="none"/>
<path d="M358 56.500l2.500-3v2q4 0 4 3.500t-4 3" fill="none" stroke="#889018" stroke-width="1.500"/><path d="M357.500 56.500l3-3v6z" fill="#889018"/>
<path d="M377.500 50.500v17M454.500 50.500v17M531.500 50.500v17" stroke="#a0a0a0" stroke-width="1"/><path d="M378.500 50.500v17M455.500 50.500v17M532.500 50.500v17" stroke="#fafafa" stroke-width="1"/>
<ellipse cx="397.9" cy="62.5" rx="2.600" ry="2.300" fill="#c8a468"/><ellipse cx="398.9" cy="64" rx="2.600" ry="1.300" fill="#e0d0b0" opacity=".8"/>
<circle cx="391.9" cy="57" r="5.300" fill="#d6ecf8" stroke="#6c88a8" stroke-width="1.400"/><path d="M387.9 54.5a5 5 0 0 1 6-2.500" stroke="#fff" stroke-width="1" fill="none"/>
<text x="391.900" y="59.500" font-size="6.500" font-weight="bold" text-anchor="middle" fill="#5878a0" letter-spacing="-.3">1:1</text>
<ellipse cx="420.8" cy="62.5" rx="2.600" ry="2.300" fill="#c8a468"/><ellipse cx="421.8" cy="64" rx="2.600" ry="1.300" fill="#e0d0b0" opacity=".8"/>
<circle cx="414.8" cy="57" r="5.300" fill="#d6ecf8" stroke="#6c88a8" stroke-width="1.400"/><path d="M410.8 54.5a5 5 0 0 1 6-2.500" stroke="#fff" stroke-width="1" fill="none"/>
<rect x="411.300" y="54.500" width="7" height="5" fill="none" stroke="#3c5c84" stroke-width="1.300"/>
<path d="M441.2 60l6 4.500-1 1.500-6.500-3z" fill="#909090"/><circle cx="438.2" cy="57" r="6.300" fill="#939393"/><circle cx="442.2" cy="55" r="3" fill="#939393"/><path d="M440.2 63h8" stroke="#a0a0a0" stroke-width="1.500" stroke-dasharray="1.500 1"/>
<rect x="459.500" y="48.500" width="22" height="21" fill="#f9f9f9" stroke="#d4d4d4"/><rect x="481.500" y="48.500" width="22" height="21" fill="#f9f9f9" stroke="#d4d4d4"/>
<path d="M466 53.500h6M466 56.500h4M466 60.500h4M466 63.500h6M466 66.500h6" stroke="#000" stroke-width="1" stroke-dasharray="1.500 1"/><path d="M472.500 52v15" stroke="#444" stroke-width="1"/><path d="M469.500 58.500l4.500-4v2.500h5v3.500h-5v2.500z" fill="#555" stroke="#000" stroke-width="1"/>
<path d="M492 53.500h6M494 56.500h4M494 60.500h4M492 63.500h6M492 66.500h6" stroke="#000" stroke-width="1" stroke-dasharray="1.500 1"/><path d="M498.500 52v15" stroke="#444" stroke-width="1"/><path d="M495.500 58.500l-4.500-4v2.500h-4.500v3.500h4.500v2.500z" fill="#555" stroke="#000" stroke-width="1"/>
<path d="M508 58l8-5v10z" fill="#5060c0"/><path d="M521 60l5 4.500-1 1-5-3.500z" fill="#c8a468"/><circle cx="519.500" cy="56.500" r="4.800" fill="#d0dcf4" stroke="#8c9cc4" stroke-width="1.300"/>
<path d="M544 59h73" stroke="#7a7a7a" stroke-width="2"/><path d="M544 60.500h73" stroke="#fcfcfc" stroke-width="1"/>
<path d="M619.500 50.500h8v14l-4 4.500-4-1z" fill="#f2f2f2"/><path d="M627.500 50v14.500l-4 4.500" fill="none" stroke="#6a6a6a" stroke-width="1.200"/><path d="M619.500 51v17" stroke="#fff" stroke-width="1"/>
</svg>
<svg style="left:0;top:0" width="0" height="0"><defs>
<filter id="nz" x="0" y="0" width="100%" height="100%" color-interpolation-filters="sRGB"><feTurbulence type="fractalNoise" baseFrequency=".22 .3" numOctaves="2" seed="7"/><feColorMatrix type="matrix" values=".3 0 0 0 .67  .3 0 0 0 .67  .3 0 0 0 .67  0 0 0 0 1"/></filter>
</defs></svg>
<svg style="left:0;top:721px" width="271" height="26"><rect width="271" height="26" fill="#d2d2d2" filter="url(#nz)"/></svg>
<div style="left:0;top:746px;width:1094px;height:1px;background:#a8a8a8"></div>
<div style="left:0;top:721px;width:62px;height:24px;background:#f0f0f0;border-radius:0 0 5px 5px;border-right:1px solid #9a9a9a;border-bottom:1px solid #9a9a9a"></div>
<div style="left:62px;top:721px;width:67px;height:24px;background:#f0f0f0;border-radius:5px 5px 5px 5px;border:1px solid #a4a4a4;border-left-color:#c8c8c8"></div>
<span class="t" style="left:8px;top:726px;font-size:12px;letter-spacing:-.1px">Assistant</span>
<span class="t" style="left:70px;top:727px;font-size:12px;letter-spacing:.1px">Toolpaths</span>
<svg style="left:1094px;top:721px" width="272" height="26"><rect width="272" height="26" fill="#d2d2d2" filter="url(#nz)"/></svg>
<div style="left:1094px;top:746px;width:272px;height:1px;background:#a8a8a8"></div>
<div style="left:1095px;top:721px;width:48px;height:24px;background:#f0f0f0;border-radius:0 0 5px 5px;border-right:1px solid #9a9a9a;border-bottom:1px solid #9a9a9a"></div>
<div style="left:1143px;top:721px;width:49px;height:24px;background:#f0f0f0;border-radius:5px;border:1px solid #a4a4a4;border-left-color:#c8c8c8"></div>
<span class="t" style="left:1103px;top:726px;font-size:12px;letter-spacing:-.3px">Layers</span>
<span class="t" style="left:1151px;top:727px;font-size:12px;letter-spacing:-.1px">Add In</span>
<div style="left:1093px;top:43px;width:1px;height:704px;background:#9c9c9c"></div>
<div style="left:1365px;top:43px;width:1px;height:678px;background:#9a9a9a"></div><div style="left:1364px;top:43px;width:1px;height:678px;background:#f6f6f6"></div>
<div style="left:1192px;top:721px;width:174px;height:1px;background:#9c9c9c"></div>
<div style="left:1023px;top:751px;width:66px;height:18px;border-left:1px solid #a0a0a0;border-top:1px solid #a0a0a0;background:#f0f0f0"></div>
<span class="t" style="left:1026px;top:753px;font-size:12px;letter-spacing:-.45px">X: 1579.539</span>
<div style="left:1092px;top:751px;width:66px;height:18px;border-left:1px solid #a0a0a0;border-top:1px solid #a0a0a0;background:#f0f0f0"></div>
<span class="t" style="left:1095px;top:753px;font-size:12px;letter-spacing:-.45px">Y: -812.957</span>
<div style="left:1161px;top:751px;width:61px;height:18px;border-left:1px solid #a0a0a0;border-top:1px solid #a0a0a0;background:#f0f0f0"></div>
<div style="left:1224px;top:751px;width:70px;height:18px;border-left:1px solid #a0a0a0;border-top:1px solid #a0a0a0;background:#f0f0f0"></div>
<div style="left:1297px;top:751px;width:70px;height:18px;border-left:1px solid #a0a0a0;border-top:1px solid #a0a0a0;background:#f0f0f0"></div>
<div style="left:277px;top:684px;width:21px;height:18px;background:#f4f4f4;border:1px solid #8c8c8c;border-left-color:#fff;border-top-color:#fff;box-shadow:-1px -1px 0 #8c8c8c"></div>
<div style="left:298px;top:685px;width:773px;height:17px;background:#f0f0f0"></div>
<div style="left:316px;top:686px;width:738px;height:15px;background:#cdcdcd"></div>
<svg style="left:270px;top:680px" width="830" height="30"><path d="M16 10.5v7M19 9l5 5-5 5z" fill="#000" stroke="#000" stroke-width="1" stroke-dasharray="2 1.5"/><path d="M40 10.200L36.200 13.500l3.800 3.300M790.500 10.200l3.800 3.300-3.800 3.300" fill="none" stroke="#505050" stroke-width="2.200"/></svg>
<div style="left:1071px;top:95px;width:17px;height:588px;background:#f0f0f0"></div>
<div style="left:1072px;top:112px;width:15px;height:556px;background:#cdcdcd"></div>
<svg style="left:1066px;top:95px" width="28" height="600"><path d="M10.200 10.800L13.500 7.200l3.300 3.600M10.200 580.200l3.300 3.600 3.300-3.600" fill="none" stroke="#505050" stroke-width="2.200"/></svg>
<div style="left:1071px;top:74px;width:17px;height:21px;background:#f4f4f4;border:1px solid #8c8c8c;border-left-color:#fff;border-top-color:#fff;box-shadow:-1px 0 0 #8c8c8c"></div>
<svg style="left:1071px;top:74px" width="17" height="21"><path d="M4.5 7.5h3M9.5 7.5h3" stroke="#000" stroke-width="1.2"/><path d="M4 10.5h9L8.5 15z" fill="#000"/></svg>
<div style="left:1070px;top:95px;width:1px;height:590px;background:#f9f9f9"></div><div style="left:298px;top:684px;width:773px;height:1px;background:#f9f9f9"></div><div style="left:1088px;top:95px;width:1px;height:612px;background:#e6e6e6"></div>
<div style="left:277px;top:706px;width:811px;height:1px;background:#b8b8b8"></div>
<div style="left:277px;top:706px;width:1px;height:38px;background:#b8b8b8"></div>
<div style="left:333px;top:712px;width:30px;height:30px;background:#ffffff;border:1px solid #000;box-shadow:1px 1px 0 #888"></div>
<div style="left:368px;top:712px;width:30px;height:30px;background:#000000;border:1px solid #000;box-shadow:1px 1px 0 #888"></div>
<div style="left:403px;top:712px;width:30px;height:30px;background:#00ffff;border:1px solid #000;box-shadow:1px 1px 0 #888"></div>
<div style="left:438px;top:712px;width:30px;height:30px;background:#3040d8;border:1px solid #000;box-shadow:1px 1px 0 #888"></div>
<div style="left:473px;top:712px;width:30px;height:30px;background:#58b850;border:1px solid #000;box-shadow:1px 1px 0 #888"></div>
<div style="left:508px;top:712px;width:30px;height:30px;background:#d81020;border:1px solid #000;box-shadow:1px 1px 0 #888"></div>
<div style="left:543px;top:712px;width:30px;height:30px;background:#a030e0;border:1px solid #000;box-shadow:1px 1px 0 #888"></div>
<div style="left:578px;top:712px;width:30px;height:30px;background:#ffff80;border:1px solid #000;box-shadow:1px 1px 0 #888"></div>
<div style="left:613px;top:712px;width:30px;height:30px;background:#a89830;border:1px solid #000;box-shadow:1px 1px 0 #888"></div>
<div style="left:648px;top:712px;width:30px;height:30px;background:#f8c818;border:1px solid #000;box-shadow:1px 1px 0 #888"></div>
<div style="left:683px;top:712px;width:30px;height:30px;background:#060606;border:1px solid #000;box-shadow:1px 1px 0 #888"></div>
<div style="left:718px;top:712px;width:30px;height:30px;background:#060606;border:1px solid #000;box-shadow:1px 1px 0 #888"></div>
<div style="left:753px;top:712px;width:30px;height:30px;background:#060606;border:1px solid #000;box-shadow:1px 1px 0 #888"></div>
<div style="left:788px;top:712px;width:30px;height:30px;background:#060606;border:1px solid #000;box-shadow:1px 1px 0 #888"></div>
<div style="left:823px;top:712px;width:30px;height:30px;background:#060606;border:1px solid #000;box-shadow:1px 1px 0 #888"></div>
<div style="left:858px;top:712px;width:30px;height:30px;background:#060606;border:1px solid #000;box-shadow:1px 1px 0 #888"></div>
<div style="left:893px;top:712px;width:30px;height:30px;background:#060606;border:1px solid #000;box-shadow:1px 1px 0 #888"></div>
<div style="left:928px;top:712px;width:30px;height:30px;background:#060606;border:1px solid #000;box-shadow:1px 1px 0 #888"></div>
<div style="left:963px;top:712px;width:30px;height:30px;background:#060606;border:1px solid #000;box-shadow:1px 1px 0 #888"></div>
<div style="left:998px;top:712px;width:30px;height:30px;background:#060606;border:1px solid #000;box-shadow:1px 1px 0 #888"></div>
<div style="left:1033px;top:712px;width:30px;height:30px;background:#060606;border:1px solid #000;box-shadow:1px 1px 0 #888"></div>
<div style="left:298px;top:723px;width:25px;height:20px;background:#000;box-shadow:1px 1px 0 #888"></div>
<div style="left:283px;top:711px;width:25px;height:20px;background:#fff;border:1px solid #000"></div>
<svg style="left:310px;top:709px" width="14" height="14"><rect x="1" y="2.5" width="7" height="5" rx="2.5" fill="none" stroke="#000" stroke-width="1.2"/><rect x="5" y="5.5" width="7" height="5" rx="2.5" fill="none" stroke="#000" stroke-width="1.2"/></svg>
<svg style="left:1070px;top:706px" width="20" height="40"><path d="M6.200 11.800L9.500 8.200l3.300 3.600M6.200 30.700l3.300 3.600 3.300-3.600" fill="none" stroke="#505050" stroke-width="2.200"/></svg>
</div></body></html>
